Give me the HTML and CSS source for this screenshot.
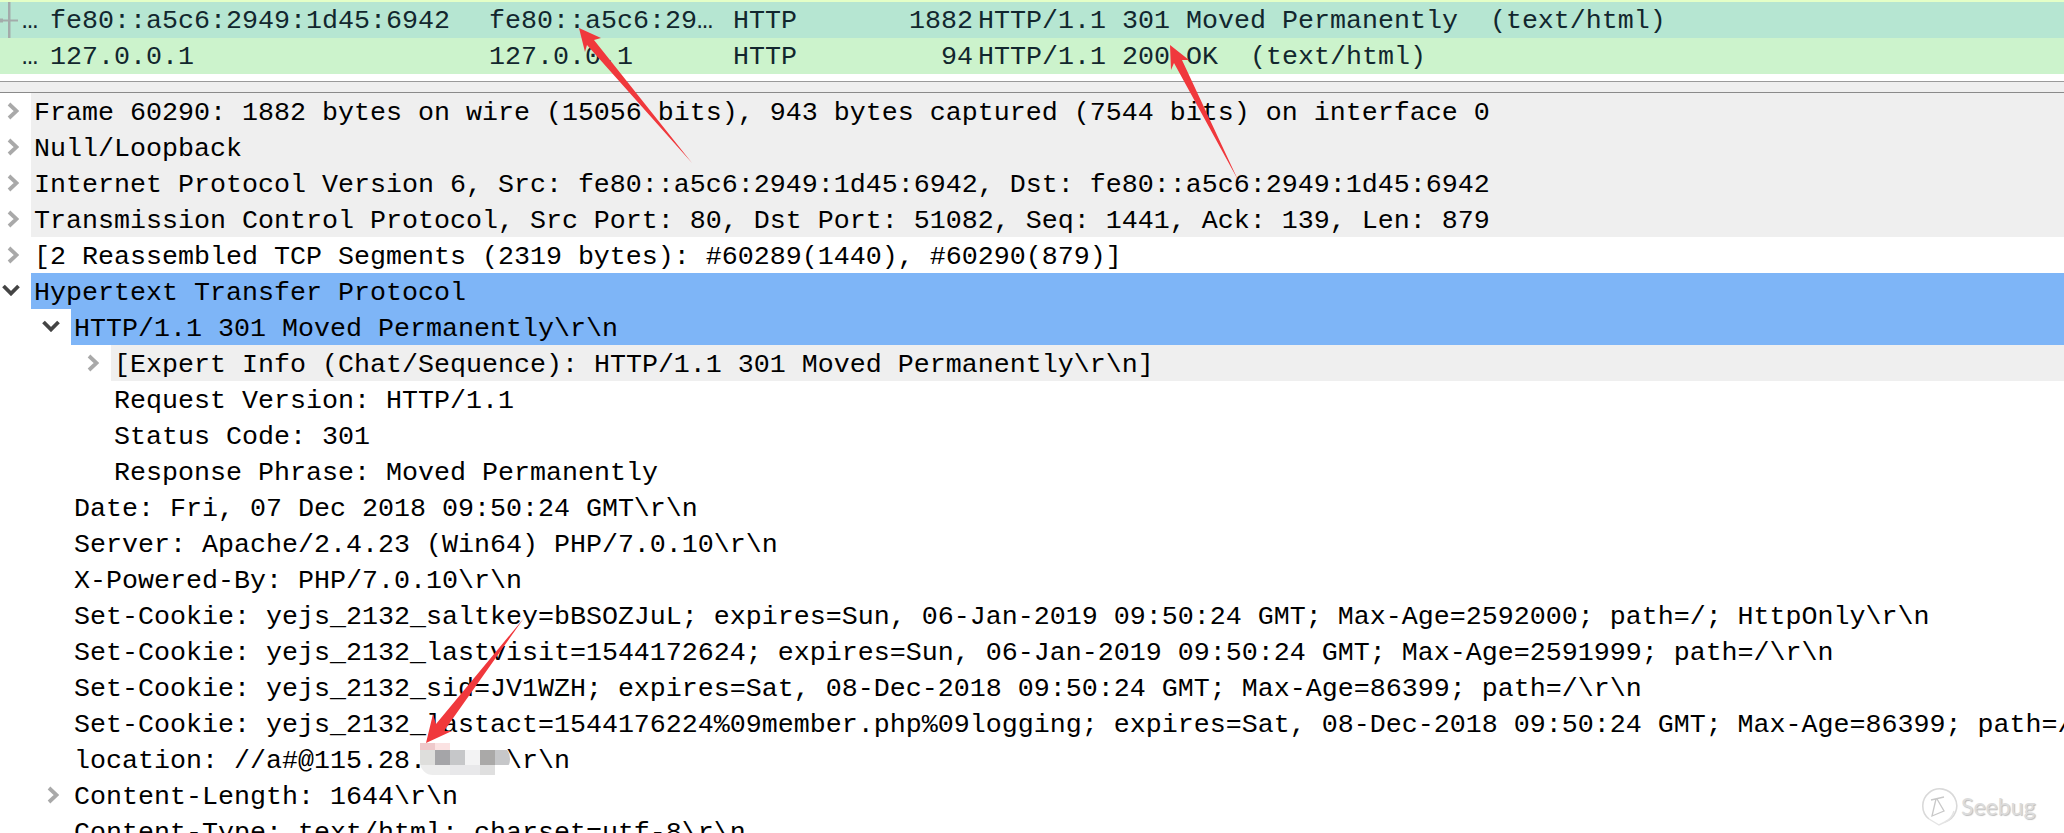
FILE: index.html
```html
<!DOCTYPE html>
<html lang="en">
<head>
<meta charset="utf-8">
<title>Wireshark packet detail</title>
<link rel="stylesheet" href="styles.css">
</head>
<body>
<svg class="defs" width="0" height="0" aria-hidden="true">
  <symbol id="right" viewBox="0 0 12 18"><path d="M2 2 L9.5 9 L2 16" fill="none" stroke="currentColor" stroke-width="3.8"/></symbol>
  <symbol id="down" viewBox="0 0 18 12"><path d="M1.5 2 L9 9.5 L16.5 2" fill="none" stroke="currentColor" stroke-width="3.8"/></symbol>
</svg>
<main class="app">
  <section class="packets">
    <div class="packet resp">
      <svg class="rel" viewBox="0 0 18 36" aria-hidden="true"><path d="M0 16.5h3v4H0zM3 17.5h15v2H3zM8 0h2.500v36H8z"/></svg>
      <span class="more">…</span><span>fe80::a5c6:2949:1d45:6942</span><span>fe80::a5c6:29…</span><span>HTTP</span><span class="len">1882</span><span>HTTP/1.1 301 Moved Permanently  (text/html)</span>
    </div>
    <div class="packet ok">
      <span class="more">…</span><span>127.0.0.1</span><span>127.0.0.1</span><span>HTTP</span><span class="len">94</span><span>HTTP/1.1 200 OK  (text/html)</span>
    </div>
  </section>
  <div class="splitter"></div>
  <section class="tree">
    <div class="row grey"><svg class="chev"><use href="#right"/></svg><span class="label">Frame 60290: 1882 bytes on wire (15056 bits), 943 bytes captured (7544 bits) on interface 0</span></div>
    <div class="row grey"><svg class="chev"><use href="#right"/></svg><span class="label">Null/Loopback</span></div>
    <div class="row grey"><svg class="chev"><use href="#right"/></svg><span class="label">Internet Protocol Version 6, Src: fe80::a5c6:2949:1d45:6942, Dst: fe80::a5c6:2949:1d45:6942</span></div>
    <div class="row grey"><svg class="chev"><use href="#right"/></svg><span class="label">Transmission Control Protocol, Src Port: 80, Dst Port: 51082, Seq: 1441, Ack: 139, Len: 879</span></div>
    <div class="row"><svg class="chev"><use href="#right"/></svg><span class="label">[2 Reassembled TCP Segments (2319 bytes): #60289(1440), #60290(879)]</span></div>
    <div class="row sel"><svg class="chev open"><use href="#down"/></svg><span class="label">Hypertext Transfer Protocol</span></div>
    <div class="row sel l1"><svg class="chev open"><use href="#down"/></svg><span class="label">HTTP/1.1 301 Moved Permanently\r\n</span></div>
    <div class="row grey l2"><svg class="chev"><use href="#right"/></svg><span class="label">[Expert Info (Chat/Sequence): HTTP/1.1 301 Moved Permanently\r\n]</span></div>
    <div class="row l2"><span class="leaf"></span><span class="label">Request Version: HTTP/1.1</span></div>
    <div class="row l2"><span class="leaf"></span><span class="label">Status Code: 301</span></div>
    <div class="row l2"><span class="leaf"></span><span class="label">Response Phrase: Moved Permanently</span></div>
    <div class="row l1"><span class="leaf"></span><span class="label">Date: Fri, 07 Dec 2018 09:50:24 GMT\r\n</span></div>
    <div class="row l1"><span class="leaf"></span><span class="label">Server: Apache/2.4.23 (Win64) PHP/7.0.10\r\n</span></div>
    <div class="row l1"><span class="leaf"></span><span class="label">X-Powered-By: PHP/7.0.10\r\n</span></div>
    <div class="row l1"><span class="leaf"></span><span class="label">Set-Cookie: yejs_2132_saltkey=bBSOZJuL; expires=Sun, 06-Jan-2019 09:50:24 GMT; Max-Age=2592000; path=/; HttpOnly\r\n</span></div>
    <div class="row l1"><span class="leaf"></span><span class="label">Set-Cookie: yejs_2132_lastvisit=1544172624; expires=Sun, 06-Jan-2019 09:50:24 GMT; Max-Age=2591999; path=/\r\n</span></div>
    <div class="row l1"><span class="leaf"></span><span class="label">Set-Cookie: yejs_2132_sid=JV1WZH; expires=Sat, 08-Dec-2018 09:50:24 GMT; Max-Age=86399; path=/\r\n</span></div>
    <div class="row l1"><span class="leaf"></span><span class="label">Set-Cookie: yejs_2132_lastact=1544176224%09member.php%09logging; expires=Sat, 08-Dec-2018 09:50:24 GMT; Max-Age=86399; path=/\r\n</span></div>
    <div class="row l1"><span class="leaf"></span><span class="label">location: //a#@115.28.xx.xx\r\n</span></div>
    <div class="row l1"><svg class="chev"><use href="#right"/></svg><span class="label">Content-Length: 1644\r\n</span></div>
    <div class="row l1"><span class="leaf"></span><span class="label">Content-Type: text/html; charset=utf-8\r\n</span></div>
  </section>

  <svg class="arrows" viewBox="0 0 2064 833" aria-hidden="true">
    <polygon points="579,28 601,38 594,40 692,163 587,45 585,52"/>
    <polygon points="1170,45 1189,60 1182,60 1238,180 1174,63 1171,70"/>
    <polygon points="426,743 433,714 436,724 524,618 444,731 452,731"/>
  </svg>

  <div class="mosaic" aria-hidden="true">
    <i class="m1"></i><i class="m2"></i><i class="m3"></i><i class="m3"></i><i class="m3"></i><i class="m3"></i>
    <i class="m4"></i><i class="m5"></i><i class="m6"></i><i class="m7"></i><i class="m8"></i><i class="m6"></i>
    <i class="m9"></i><i class="m9"></i><i class="m10"></i><i class="m10"></i><i class="m11"></i><i class="m3"></i>
  </div>

  <div class="mark">
    <svg class="mark-logo" viewBox="0 0 40 44" aria-hidden="true">
      <path d="M27 38 A17 17 0 1 0 11 35" fill="none" stroke="#d9d9d9" stroke-width="1.600"/>
      <path d="M27 38 A17 17 0 0 0 36 27 M11 35 L21 41 L27 38" fill="none" stroke="#e4e4e4" stroke-width="1.400"/>
      <path d="M13 16 L26 13 M18 15 L14 32 L26 27 L19 15" fill="none" stroke="#c8c8c8" stroke-width="1.300"/>
    </svg>
    <span class="mark-text">Seebug</span>
  </div>
</main>
</body>
</html>
```
FILE: styles.css
```css
* {
  box-sizing: border-box;
}

html,
body {
  margin: 0;
  height: 100%;
  background: #fff;
  overflow: hidden;
}

.defs {
  position: absolute;
}

.app {
  position: relative;
  height: 833px;
  overflow: hidden;
  font-family: "Liberation Mono", monospace;
  font-size: 26.67px;
  line-height: 36px;
  color: #000;
}

.packets {
  padding-top: 2px;
  background: linear-gradient(#e4ffc7 2px, #fff 2px);
  color: #12272e;
}

.packet {
  position: relative;
  display: grid;
  grid-template-columns: 28px 439px 244px 100px 145px minmax(0, 1fr);
  height: 36px;
  padding: 1px 0 0 22px;
}

.packet > span {
  white-space: pre;
}

.resp {
  background: #b6e6d2;
}

.ok {
  background: #ccf3cc;
}

.rel {
  position: absolute;
  left: 0;
  top: 0;
  width: 18px;
  height: 36px;
  fill: #a3abaa;
}

.len {
  text-align: right;
  padding-right: 5px;
}

.splitter {
  height: 12px;
  margin-top: 7px;
  background: #efefef;
  border-top: 1px solid #9a9a9a;
  border-bottom: 1px solid #8a8a8a;
}

.row {
  display: flex;
  align-items: center;
  height: 36px;
}

.l1 {
  padding-left: 40px;
}

.l2 {
  padding-left: 80px;
}

.chev {
  flex: none;
  width: 12px;
  height: 18px;
  margin: 0 12px 0 7px;
  color: #a9a9a9;
}

.chev.open {
  position: relative;
  top: -1px;
  width: 18px;
  height: 12px;
  margin: 0 11px 0 2px;
  color: #444;
}

.leaf {
  flex: none;
  width: 31px;
}

.label {
  flex: 1;
  min-width: 0;
  height: 36px;
  padding: 2px 0 0 3px;
  white-space: pre;
}

.grey .label {
  background: #efefef;
}

.sel .label {
  background: #7eb5f7;
}

.arrows {
  position: absolute;
  left: 0;
  top: 0;
  width: 2064px;
  height: 833px;
  fill: #f0383c;
}

.mosaic {
  position: absolute;
  left: 420px;
  top: 743px;
  display: grid;
  grid-template-columns: repeat(6, 15px);
  grid-template-rows: 7px 15px 10px;
  border-radius: 0 22px 22px 18px;
  overflow: hidden;
}

.m1 { background: #eec9cb; }
.m2 { background: #fbe2e2; }
.m3 { background: #fff; }
.m4 { background: #dededc; }
.m5 { background: #a5a5a8; }
.m6 { background: #c6c7c9; }
.m7 { background: #f3f3f4; }
.m8 { background: #aaa9a8; }
.m9 { background: #ededed; }
.m10 { background: #e8e8ea; }
.m11 { background: #dfdfdf; }

.mark {
  position: absolute;
  left: 1918px;
  top: 784px;
  display: flex;
  align-items: center;
  gap: 3px;
  height: 44px;
}

.mark-logo {
  width: 40px;
  height: 44px;
}

.mark-text {
  font-family: "Lato", sans-serif;
  font-size: 23px;
  line-height: 30px;
  color: #dcdcdc;
  text-shadow: 1px 1px 1px #bdbdbd;
}
```
